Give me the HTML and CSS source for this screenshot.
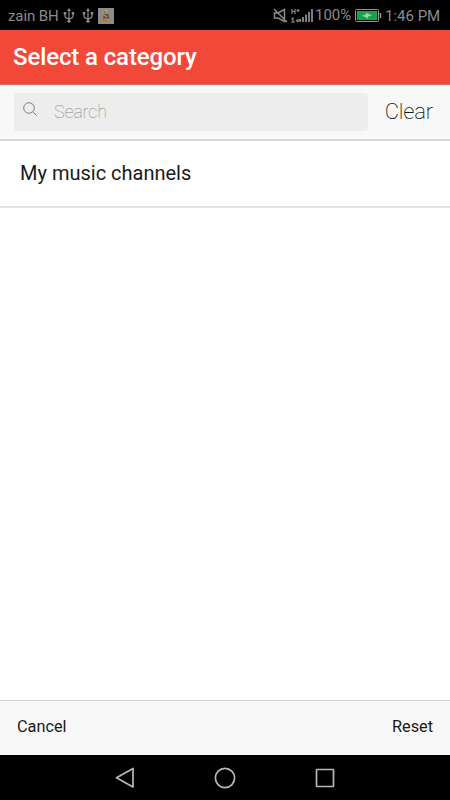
FILE: index.html
```html
<!DOCTYPE html>
<html lang="en">
<head>
  <meta charset="UTF-8">
  <title>Select a category</title>
  <link rel="stylesheet" href="styles.css">
</head>
<body>
  <div class="status-bar">
    <span class="carrier">zain BH</span>
    <svg class="usb" width="12" height="16" viewBox="0 0 12 16">
      <path d="M6 2v11M2 5v3q0 2 4 3M10 5v3q0 2-4 3"/>
      <path class="fill" d="M6 0l2 3H4zM.7 4h2.6v2.5H.7zM8.7 4h2.6v2.5H8.7z"/>
      <circle class="fill" cx="6" cy="13.2" r="1.6"/>
    </svg>
    <svg class="usb second" width="12" height="16" viewBox="0 0 12 16">
      <path d="M6 2v11M2 5v3q0 2 4 3M10 5v3q0 2-4 3"/>
      <path class="fill" d="M6 0l2 3H4zM.7 4h2.6v2.5H.7zM8.7 4h2.6v2.5H8.7z"/>
      <circle class="fill" cx="6" cy="13.2" r="1.6"/>
    </svg>
    <svg class="app-icon" width="16" height="16" viewBox="0 0 16 16">
      <rect width="16" height="16" fill="#8c8c8c"/>
      <path d="M6 2l3-.5 1 2.500-1 2-3 .5-1-2z" fill="#b79a4a"/>
      <path d="M6 6l4-.5 2 6-6 1-1-3z" fill="#5d5460"/>
      <path d="M3 12l5-2 5 2.500-2 1H4z" fill="#a8803a"/>
      <path d="M6 7l3 2M9 11l3 1" stroke="#c3a043" fill="none"/>
      <path d="M6 3l1 2M9 7l1 3" stroke="#425c86" fill="none"/>
    </svg>
    <svg class="mute" width="15" height="15" viewBox="0 0 15 15">
      <path d="M1.500 5h3.500l6.500-3.500v12L5 10H1.500zM1 1l13 13"/>
    </svg>
    <svg class="signal" width="23" height="16" viewBox="0 0 23 16">
      <path d="M1 1v5M4 1v5M1 3.500h3M5.500 2.500h3M7 1v3M.5 11l1.500-1v4M0 14h4M5 12l2 2M7 11v3"/>
      <path class="bars" d="M9 14v-3M12 14V9M15 14V6.500M18 14V4M21 14V1"/>
    </svg>
    <span class="percent">100%</span>
    <svg class="battery" width="27" height="13" viewBox="0 0 27 13">
      <rect x=".5" y=".5" width="23" height="12" rx="1" fill="#050505" stroke="#969696"/>
      <rect x="2" y="2" width="20" height="9" fill="#12a64b"/>
      <path d="M25.500 4v5" stroke="#969696" stroke-width="1.500"/>
      <path d="M7 6.500l4-1V3.500l6 3-4 1v2z" fill="#a5cdac"/>
    </svg>
    <span class="time">1:46 PM</span>
  </div>

  <div class="header">
    <h1>Select a category</h1>
  </div>

  <div class="search-panel">
    <div class="search-box">
      <svg width="15" height="15" viewBox="0 0 15 15">
        <circle cx="6" cy="6" r="5.300"/>
        <path d="M9.700 9.700l4 4"/>
      </svg>
      <input type="text" placeholder="Search">
    </div>
    <button class="clear">Clear</button>
  </div>

  <div class="category-list">
    <div class="category">My music channels</div>
  </div>

  <div class="footer">
    <button class="cancel">Cancel</button>
    <button class="reset">Reset</button>
  </div>

  <div class="nav-bar">
    <svg width="22" height="22" viewBox="0 0 22 22">
      <path d="M19 1.500v18.500L2.500 10.800z"/>
    </svg>
    <svg width="22" height="22" viewBox="0 0 22 22">
      <circle cx="11" cy="11" r="9.600"/>
    </svg>
    <svg width="22" height="22" viewBox="0 0 22 22">
      <rect x="2.500" y="2.500" width="17" height="17" rx=".6"/>
    </svg>
  </div>
</body>
</html>
```
FILE: styles.css
```css
* {
  box-sizing: border-box;
}

body {
  display: flex;
  flex-direction: column;
  height: 100vh;
  margin: 0;
  overflow: hidden;
  background-color: #fff;
  color: #1a1a1a;
  font-family: Roboto, sans-serif;
}

button {
  padding: 0;
  border: none;
  background: none;
  color: inherit;
  font-family: inherit;
}

svg {
  flex-shrink: 0;
}

.status-bar {
  display: flex;
  align-items: center;
  height: 30px;
  padding: 1px 9px 0 8px;
  background-color: #000;
  color: #8b8b8b;
  font-size: 15px;
  white-space: nowrap;
}

.carrier {
  width: 55px;
  letter-spacing: -0.1px;
}

.usb,
.mute,
.signal {
  fill: none;
  stroke: #8b8b8b;
  stroke-width: 1.2;
}

.usb .fill {
  fill: #8b8b8b;
  stroke: none;
}

.second {
  margin-left: 7px;
}

.app-icon {
  margin-left: 4px;
}

.mute {
  margin-left: auto;
  stroke-width: 1.5;
}

.signal {
  margin-left: 3px;
}

.signal .bars {
  stroke-width: 1.8;
}

.percent {
  width: 37px;
  margin-left: 1px;
  padding-bottom: 1px;
}

.battery {
  margin-left: 3px;
}

.time {
  width: 56px;
  margin-left: 3px;
}

.header {
  display: flex;
  align-items: center;
  height: 55px;
  padding-left: 13px;
  border-bottom: 1px solid #dc6a61;
  background-color: #f1483a;
  color: #fff;
}

.header h1 {
  margin: 0;
  font-size: 24px;
  font-weight: 500;
  letter-spacing: -0.12px;
}

.search-panel {
  display: flex;
  align-items: center;
  height: 56px;
  padding: 0 17px 0 14px;
  border-bottom: 2px solid #d9d9d9;
  background-color: #f8f8f8;
}

.search-box {
  display: flex;
  align-items: center;
  width: 354px;
  height: 38px;
  padding-left: 9px;
  border-radius: 4px;
  background-color: #ededed;
}

.search-box svg {
  margin-bottom: 5px;
  fill: none;
  stroke: #777;
  stroke-width: .9;
}

.search-box input {
  flex: 1;
  min-width: 0;
  margin-left: 16px;
  padding: 0 0 1px;
  border: none;
  outline: none;
  background: none;
  font-family: inherit;
  font-size: 18px;
  font-weight: 100;
  letter-spacing: -0.2px;
}

.search-box input::placeholder {
  color: #888;
}

.clear {
  margin-left: auto;
  padding-bottom: 2px;
  font-size: 22px;
  font-weight: 200;
  letter-spacing: -0.2px;
}

.category {
  height: 67px;
  padding-left: 20px;
  border-bottom: 2px solid #e2e2e2;
  font-size: 20px;
  line-height: 65px;
}

.footer {
  display: flex;
  justify-content: space-between;
  height: 55px;
  margin-top: auto;
  padding: 0 17px 4px;
  border-top: 1px solid #cfcfcf;
  background-color: #f8f8f8;
}

.footer button {
  font-size: 16.3px;
}

.nav-bar {
  display: flex;
  justify-content: center;
  align-items: center;
  gap: 78px;
  height: 45px;
  background-color: #000;
}

.nav-bar svg {
  fill: none;
  stroke: #b8b8b8;
  stroke-width: 1.7;
  stroke-linejoin: round;
}
```
